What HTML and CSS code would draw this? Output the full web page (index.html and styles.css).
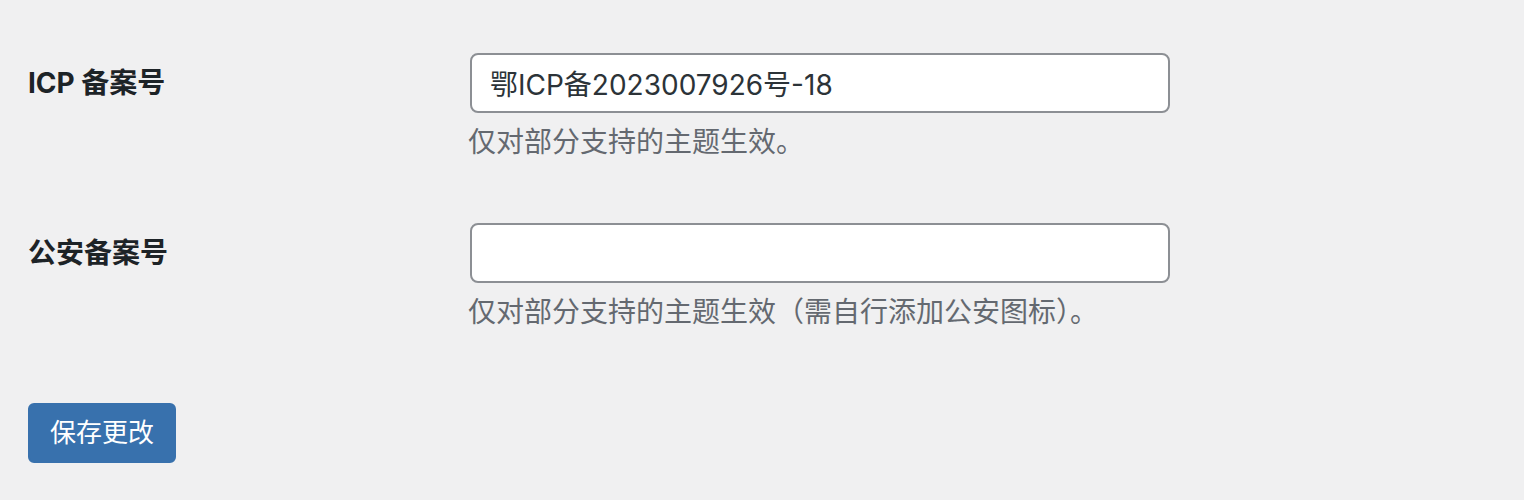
FILE: index.html
```html
<!DOCTYPE html>
<html lang="zh-CN">
<head>
<meta charset="utf-8">
<title>设置</title>
<link rel="stylesheet" href="styles.css">
</head>
<body>
<div class="page">
  <div class="form-table">
    <div class="row">
      <label class="label" for="icp">ICP 备案号</label>
      <div class="field">
        <input id="icp" class="text-input" type="text" value="鄂ICP备2023007926号-18">
        <p class="description">仅对部分支持的主题生效。</p>
      </div>
    </div>
    <div class="row">
      <label class="label" for="gongan">公安备案号</label>
      <div class="field">
        <input id="gongan" class="text-input" type="text" value="">
        <p class="description">仅对部分支持的主题生效（需自行添加公安图标）。</p>
      </div>
    </div>
  </div>
  <div class="submit">
    <button class="button-primary" type="button">保存更改</button>
  </div>
</div>
</body>
</html>
```
FILE: styles.css
```css
html, body {
  margin: 0;
  padding: 0;
  background: #f0f0f1;
}
body {
  font-family: Inter, "Noto Sans CJK SC", sans-serif;
  color: #1d2327;
}
.page {
  padding: 23px 28px 0 28px;
}
.form-table {
  display: flex;
  flex-direction: column;
}
.row {
  display: grid;
  grid-template-columns: 442px 700px;
  padding: 30px 0;
}
.label {
  font-size: 28px;
  font-weight: 700;
  line-height: 36px;
  margin-top: 12px;
  color: #1d2327;
}
.field {
  display: flex;
  flex-direction: column;
}
.text-input {
  box-sizing: border-box;
  width: 700px;
  height: 60px;
  margin: 0;
  padding: 0 18px;
  border: 2px solid #8c8f94;
  border-radius: 8px;
  background: #fff;
  font-family: Inter, "Noto Sans CJK SC", sans-serif;
  font-size: 28px;
  color: #2c3338;
  outline: none;
}
.description {
  margin: 8px 0 0 -2px;
  font-size: 28px;
  line-height: 42px;
  color: #646970;
}
.submit {
  padding-top: 40px;
}
.button-primary {
  box-sizing: border-box;
  height: 60px;
  padding: 0 20px;
  border: 2px solid #3871ad;
  border-radius: 6px;
  background: #3871ad;
  color: #fff;
  font-family: Inter, "Noto Sans CJK SC", sans-serif;
  font-size: 26px;
  line-height: 56px;
  cursor: pointer;
}
```
